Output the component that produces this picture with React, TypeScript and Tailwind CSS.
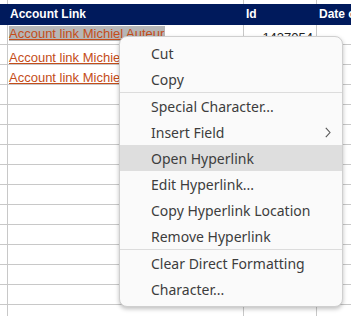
import React from 'react'

const MENU: ({ label: string; sub?: boolean; active?: boolean } | 'sep')[] = [
  { label: 'Cut' },
  { label: 'Copy' },
  'sep',
  { label: 'Special Character...' },
  { label: 'Insert Field', sub: true },
  { label: 'Open Hyperlink', active: true },
  { label: 'Edit Hyperlink...' },
  { label: 'Copy Hyperlink Location' },
  { label: 'Remove Hyperlink' },
  'sep',
  { label: 'Clear Direct Formatting' },
  { label: 'Character...' },
]

function Row({ children, id }: { children?: React.ReactNode; id?: React.ReactNode }) {
  return (
    <div className="flex h-[20px] shrink-0 border-b border-[#c8c8c8]">
      <div className="w-[8px] shrink-0 border-r border-[#c8c8c8]" />
      <div className="w-[236px] shrink-0 border-r border-[#c8c8c8] relative">{children}</div>
      <div className="w-[73px] shrink-0 border-r border-[#c8c8c8] relative">{id}</div>
      <div className="flex-1" />
    </div>
  )
}

function LinkText({ text }: { text: string }) {
  return (
    <span className="absolute left-[1px] top-[5px] whitespace-nowrap text-[13px] leading-[15px] text-[#c44d1a] underline decoration-[#c44d1a] underline-offset-[1px]">
      {text}
    </span>
  )
}

export default function App() {
  return (
    <div className="relative w-[351px] h-[316px] overflow-hidden bg-white font-['Liberation_Sans',Arial,sans-serif]">
      <div className="flex flex-col">
        {/* partial row above header */}
        <div className="flex h-[4px] shrink-0">
          <div className="w-[8px] shrink-0 border-r border-[#c8c8c8]" />
          <div className="w-[236px] shrink-0 border-r border-[#c8c8c8]" />
          <div className="w-[73px] shrink-0 border-r border-[#c8c8c8]" />
        </div>
        {/* header */}
        <div className="flex h-[21px] shrink-0 bg-[#001a5c] text-white font-bold text-[12px] leading-[21px]">
          <div className="w-[10px] shrink-0" />
          <div className="w-[234px] shrink-0">Account Link</div>
          <div className="w-[74px] shrink-0 pl-[2px]">Id</div>
          <div className="whitespace-nowrap pl-[1px]">Date created</div>
        </div>
        <Row
          id={
            <span className="absolute right-[3px] top-[5px] text-[13px] leading-[15px] text-[#222]">1437054</span>
          }
        >
          <span className="absolute left-[1px] top-[1px] whitespace-nowrap bg-[#b6b6b6] pr-[1px] text-[13px] leading-[15px] text-[#c44d1a] underline decoration-[#c44d1a] underline-offset-[1px]">
            Account link Michiel Auteur
          </span>
        </Row>
        <Row>
          <LinkText text="Account link Michiel Auteur" />
        </Row>
        <Row>
          <LinkText text="Account link Michiel Auteur" />
        </Row>
        {Array.from({ length: 12 }).map((_, i) => (
          <Row key={i} />
        ))}
      </div>

      {/* context menu */}
      <div className="absolute left-[119px] top-[36px] w-[224px] rounded-[8px] border border-[#cfcfcf] bg-[#fafafa] pt-[3px] pb-[4px] shadow-[0_2px_4px_rgba(0,0,0,0.25)] font-['Noto_Sans','Open_Sans',sans-serif] text-[14px] text-[#3d3d3d]">
        {MENU.map((m, i) =>
          m === 'sep' ? (
            <div key={i} className="h-px bg-[#dcdcdc]" />
          ) : (
            <div
              key={i}
              className={`flex h-[26px] items-center justify-between pl-[31px] pr-[11px] ${m.active ? 'bg-[#dedede]' : ''}`}
            >
              <span className="whitespace-nowrap">{m.label}</span>
              {m.sub && (
                <svg width="6" height="11" viewBox="0 0 6 11">
                  <path d="M0.8 0.8 L5 5.5 L0.8 10.2" fill="none" stroke="#555" strokeWidth="1.1" />
                </svg>
              )}
            </div>
          )
        )}
      </div>
    </div>
  )
}
